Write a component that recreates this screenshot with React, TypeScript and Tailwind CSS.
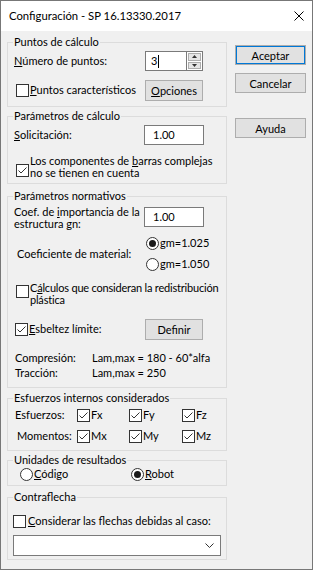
import React from 'react';

// Configuración dialog (Windows 10 style)

function Check({ checked }: { checked?: boolean }) {
  return (
    <span className="flex h-[13px] w-[13px] shrink-0 items-center justify-center border border-[#333] bg-white">
      {checked && (
        <svg width="11" height="11" viewBox="0 0 11 11">
          <path d="M1.5 5.5 L4 8 L9.5 2.5" stroke="#333" strokeWidth="1" fill="none" />
        </svg>
      )}
    </span>
  );
}

function Radio({ checked }: { checked?: boolean }) {
  return (
    <span className="flex h-[13px] w-[13px] shrink-0 items-center justify-center rounded-full border border-[#333] bg-white">
      {checked && <span className="h-[7px] w-[7px] rounded-full bg-[#1a1a1a]" />}
    </span>
  );
}

function Btn({ children, className = '' }: { children: React.ReactNode; className?: string }) {
  return (
    <button className={`flex items-center justify-center border border-[#adadad] bg-[#e1e1e1] text-[11px] leading-none ${className}`}>
      {children}
    </button>
  );
}

function Group({ title, className, children }: { title: string; className: string; children: React.ReactNode }) {
  return (
    <fieldset className={`border border-[#dcdcdc] ${className}`}>
      <legend className="ml-[5px] px-[1px] leading-[16px]">{title}</legend>
      {children}
    </fieldset>
  );
}

function Input({ value, className = '' }: { value: string; className?: string }) {
  return (
    <div className={`flex h-[20px] items-center border border-[#7a7a7a] bg-white pl-[8px] ${className}`}>{value}</div>
  );
}

export default function App() {
  return (
    <div className="flex h-[570px] w-[313px] flex-col whitespace-nowrap border border-[#777] bg-[#f0f0f0] font-['Lato',sans-serif] text-[11px] text-black">
      {/* title bar */}
      <div className="flex h-[30px] shrink-0 items-center justify-between bg-white pl-[8px] pr-[8px] text-[11.3px]">
        <span>Configuración - SP 16.13330.2017</span>
        <svg width="10" height="10" viewBox="0 0 10 10">
          <path d="M0.5 0.5 L9.5 9.5 M9.5 0.5 L0.5 9.5" stroke="#000" strokeWidth="1" />
        </svg>
      </div>

      <div className="flex flex-row pl-[6px]">
        <div className="flex w-[220px] flex-col pt-[3px]">
          <Group title="Puntos de cálculo" className="h-[73px]">
            <div className="mt-[1px] flex h-[20px] items-center">
              <span className="w-[137px] pl-[6px]">
                <span className="underline">N</span>úmero de puntos:
              </span>
              <div className="flex h-[20px] w-[42px] items-center border border-[#7a7a7a] bg-white pl-[5px]">
                3<span className="ml-[1px] h-[13px] w-[1px] bg-black" />
              </div>
              <div className="flex h-[20px] w-[16px] flex-col gap-[1px] border-y border-r border-[#7a7a7a] bg-white p-[1px]">
                <div className="flex flex-1 items-center justify-center border border-[#adadad] bg-[#e6e6e6]">
                  <svg width="5" height="3" viewBox="0 0 5 3"><path d="M0 3 L2.5 0 L5 3 Z" fill="#333" /></svg>
                </div>
                <div className="flex flex-1 items-center justify-center border border-[#adadad] bg-[#e6e6e6]">
                  <svg width="5" height="3" viewBox="0 0 5 3"><path d="M0 0 L2.5 3 L5 0 Z" fill="#333" /></svg>
                </div>
              </div>
            </div>
            <div className="mt-[9px] flex h-[21px] items-center">
              <span className="flex w-[137px] items-center gap-[1px] pl-[8px]">
                <Check />
                <span>
                  <span className="underline">P</span>untos característicos
                </span>
              </span>
              <Btn className="h-[21px] w-[58px]">
                <span className="underline">O</span>pciones
              </Btn>
            </div>
          </Group>

          <Group title="Parámetros de cálculo" className="mt-[1px] h-[76px]">
            <div className="mt-[1px] flex h-[20px] items-center">
              <span className="w-[136px] pl-[6px]">
                <span className="underline">S</span>olicitación:
              </span>
              <Input value="1.00" className="w-[60px]" />
            </div>
            <div className="mt-[10px] flex items-start gap-[1px] pl-[8px]">
              <span className="mt-[9px]">
                <Check checked />
              </span>
              <span className="leading-[12px]">
                Los componentes de <span className="underline">b</span>arras complejas
                <br />
                no se tienen en cuenta
              </span>
            </div>
          </Group>

          <Group title="Parámetros normativos" className="mt-[4px] h-[200px]">
            <div className="mt-[2px] flex items-start">
              <span className="w-[136px] pl-[6px] leading-[12px]">
                Coef. de <span className="underline">i</span>mportancia de la
                <br />
                estructura gn:
              </span>
              <Input value="1.00" className="mt-[1px] w-[60px]" />
            </div>
            <div className="mt-[7px] flex items-center">
              <span className="w-[138px] pl-[9px]">Coeficiente de material:</span>
              <div className="flex flex-col gap-[8px]">
                <span className="flex h-[13px] items-center gap-[1px]">
                  <Radio checked />
                  gm=1.025
                </span>
                <span className="flex h-[13px] items-center gap-[1px]">
                  <Radio />
                  gm=1.050
                </span>
              </div>
            </div>
            <div className="mt-[11px] flex items-start gap-[1px] pl-[8px]">
              <span className="mt-[3px]">
                <Check />
              </span>
              <span className="leading-[12px] tracking-[-0.2px]">
                C<span className="underline">á</span>lculos que consideran la redistribución
                <br />
                plástica
              </span>
            </div>
            <div className="mt-[13px] flex h-[21px] items-center">
              <span className="flex w-[137px] items-center gap-[1px] pl-[7px]">
                <Check checked />
                <span>
                  <span className="underline">E</span>sbeltez límite:
                </span>
              </span>
              <Btn className="h-[21px] w-[58px]">Definir</Btn>
            </div>
            <div className="mt-[10px] flex h-[15px] items-center leading-[15px]">
              <span className="w-[84px] pl-[7px]">Compresión:</span>
              <span>Lam,max = 180 - 60*alfa</span>
            </div>
            <div className="flex h-[15px] items-center leading-[15px]">
              <span className="w-[84px] pl-[7px]">Tracción:</span>
              <span>Lam,max = 250</span>
            </div>
          </Group>

          <Group title="Esfuerzos internos considerados" className="mt-[2px] h-[61px]">
            <div className="mt-[3px] flex h-[13px] items-center">
              <span className="w-[69px] pl-[7px]">Esfuerzos:</span>
              <span className="flex w-[52px] items-center gap-[1px]"><Check checked />Fx</span>
              <span className="flex w-[53px] items-center gap-[1px]"><Check checked />Fy</span>
              <span className="flex items-center gap-[1px]"><Check checked />Fz</span>
            </div>
            <div className="mt-[8px] flex h-[13px] items-center">
              <span className="w-[69px] pl-[9px]">Momentos:</span>
              <span className="flex w-[52px] items-center gap-[1px]"><Check checked />Mx</span>
              <span className="flex w-[53px] items-center gap-[1px]"><Check checked />My</span>
              <span className="flex items-center gap-[1px]"><Check checked />Mz</span>
            </div>
          </Group>

          <Group title="Unidades de resultados" className="mt-[1px] h-[34px]">
            <div className="flex h-[13px] items-center pl-[12px]">
              <span className="flex w-[111px] items-center gap-[1px]">
                <Radio />
                <span>
                  <span className="underline">C</span>ódigo
                </span>
              </span>
              <span className="flex items-center gap-[1px]">
                <Radio checked />
                <span>
                  <span className="underline">R</span>obot
                </span>
              </span>
            </div>
          </Group>

          <Group title="Contraflecha" className="mt-[3px] h-[71px]">
            <div className="mt-[10px] flex h-[13px] items-center gap-[2px] pl-[5px]">
              <Check />
              <span>
                <span className="underline">C</span>onsiderar las flechas debidas al caso:
              </span>
            </div>
            <div className="ml-[5px] mt-[7px] flex h-[21px] w-[208px] items-center justify-end border border-[#7a7a7a] bg-white pr-[6px]">
              <svg width="9" height="5" viewBox="0 0 9 5">
                <path d="M0.5 0.5 L4.5 4.5 L8.5 0.5" stroke="#333" strokeWidth="1" fill="none" />
              </svg>
            </div>
          </Group>
        </div>

        <div className="ml-[8px] flex flex-col pt-[14px]">
          <Btn className="h-[20px] w-[71px] border-[#0078d7] shadow-[inset_0_0_0_1px_#0078d7]">Aceptar</Btn>
          <Btn className="mt-[8px] h-[20px] w-[71px]">Cancelar</Btn>
          <Btn className="mt-[25px] h-[20px] w-[71px]">Ayuda</Btn>
        </div>
      </div>
    </div>
  );
}
